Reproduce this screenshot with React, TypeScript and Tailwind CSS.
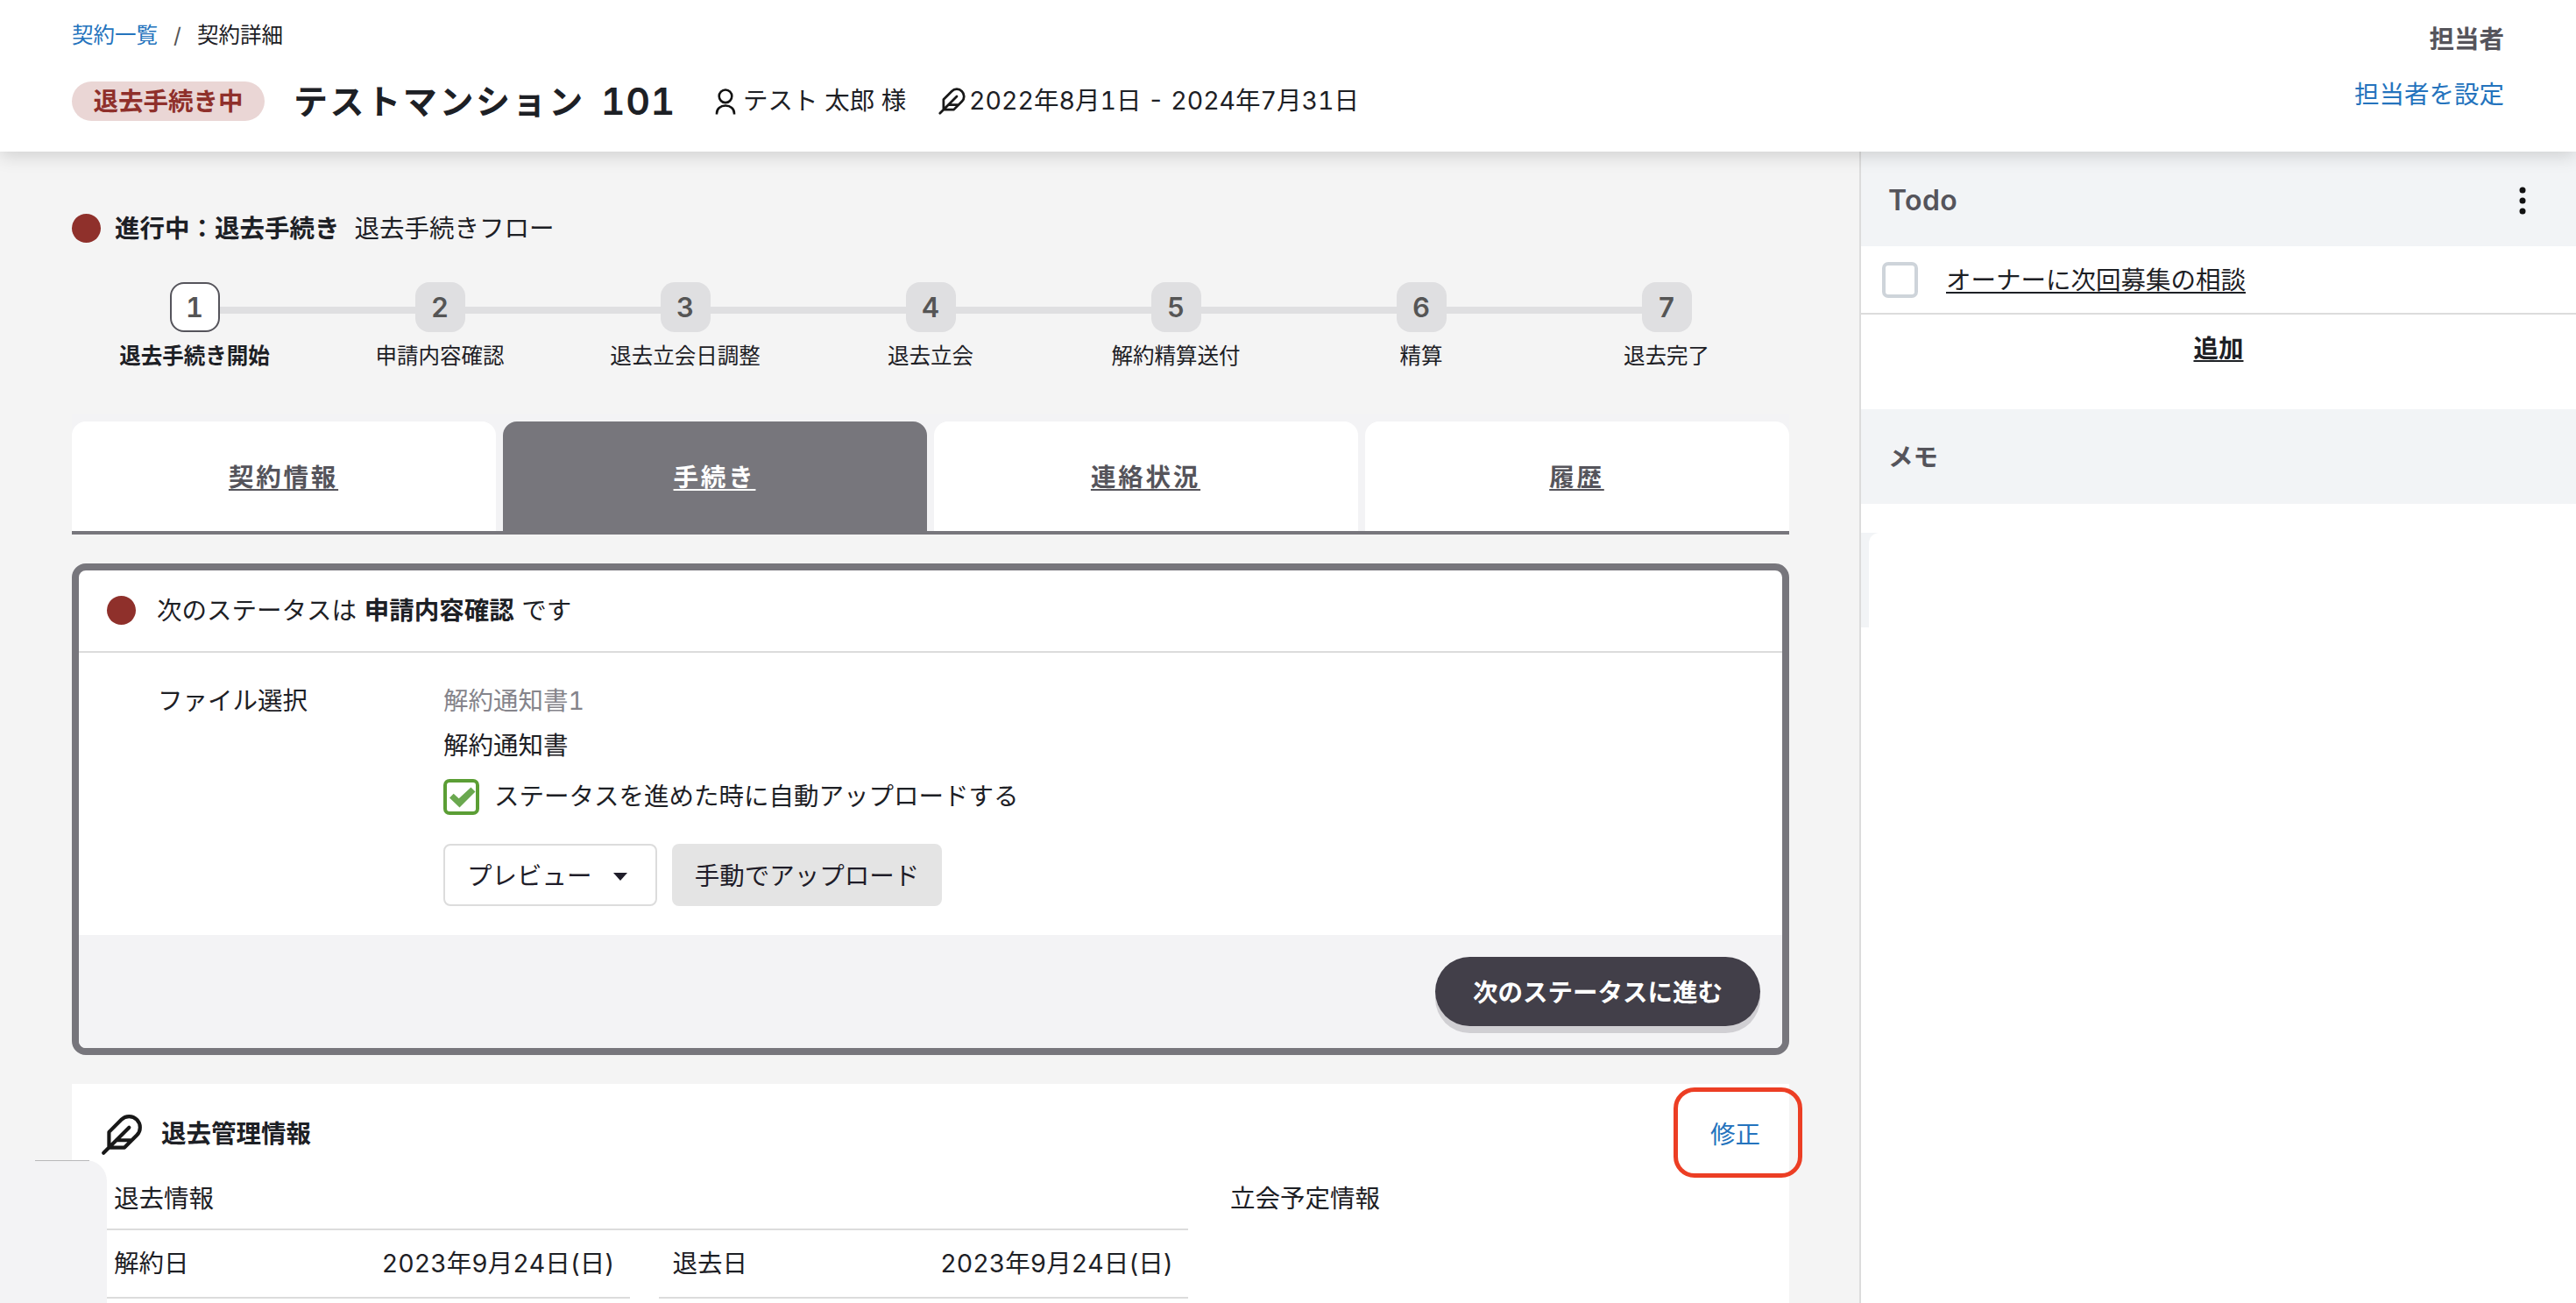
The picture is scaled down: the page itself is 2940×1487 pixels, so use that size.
import { clsx } from 'clsx';

const steps = [
  '退去手続き開始',
  '申請内容確認',
  '退去立会日調整',
  '退去立会',
  '解約精算送付',
  '精算',
  '退去完了',
];

const tabs = ['契約情報', '手続き', '連絡状況', '履歴'];

const dates = [
  { label: '解約日', value: '2023年9月24日(日)' },
  { label: '退去日', value: '2023年9月24日(日)' },
];

function PersonIcon() {
  return (
    <svg viewBox="0 0 24 30" className="h-[30px] w-6" fill="none" stroke="#111" strokeWidth="2.6">
      <circle cx="12" cy="8.800" r="7.300" />
      <path d="M2 29.500v-1c0-5.500 4.300-9 10-9s10 3.500 10 9v1" />
    </svg>
  );
}

function FeatherIcon({ className }: { className?: string }) {
  return (
    <svg
      viewBox="0 0 24 24"
      className={className}
      fill="none"
      stroke="#181818"
      strokeWidth="2"
      strokeLinecap="round"
      strokeLinejoin="round"
    >
      <path d="M20.240 12.240a6 6 0 0 0-8.490-8.490L5 10.500V19h8.500zM16 8L2 22M17.500 15H9" />
    </svg>
  );
}

function Header() {
  return (
    <header className="relative z-20 flex h-[173px] justify-between bg-white pl-[82px] pr-[82px] shadow-[0_4px_20px_rgba(0,0,0,0.16)]">
      <div>
        <nav className="flex h-[81px] items-center text-[24.5px]">
          <a className="text-[#2473bd]">契約一覧</a>
          <span className="w-[45px] text-center text-[#555]">/</span>
          <span>契約詳細</span>
        </nav>
        <div className="flex h-[69px] items-center">
          <span className="flex h-[45px] w-[220px] items-center justify-center rounded-full bg-[#ead6d5] pt-0.5 text-[28.5px] font-bold text-[#8f302b]">
            退去手続き中
          </span>
          <h1 className="ml-[33px] flex w-[481px] shrink-0 items-center whitespace-nowrap text-[39px] font-bold tracking-[2.6px]">
            テストマンション
            <span className="ml-[18px] text-[43px] font-semibold tracking-[0.5px]">101</span>
          </h1>
          <PersonIcon />
          <span className="ml-[8px] w-[222px]">テスト 太郎 様</span>
          <FeatherIcon className="size-[33px]" />
          <span className="ml-[3px]">2022年8月1日 - 2024年7月31日</span>
        </div>
      </div>
      <div className="flex flex-col items-end">
        <span className="mt-[23px] flex h-11 items-center font-bold text-[#55545b]">担当者</span>
        <a className="mt-[19px] flex h-11 items-center text-[#2473bd]">担当者を設定</a>
      </div>
    </header>
  );
}

function Stepper() {
  return (
    <ol className="mt-[41px] grid grid-cols-7">
      {steps.map((step, i) => (
        <li key={step} className="flex flex-col items-center">
          <div className="flex w-full items-center">
            <span className={clsx('mt-1.5 h-2 flex-1', i > 0 && 'bg-[#dfdfe1]')} />
            <span
              className={clsx(
                'flex size-[57px] items-center justify-center rounded-2xl text-[31px] font-semibold text-[#555]',
                i === 0 ? 'border-2 border-[#55545b] bg-white' : 'bg-[#dfdfe1]'
              )}
            >
              {i + 1}
            </span>
            <span className={clsx('mt-1.5 h-2 flex-1', i < 6 && 'bg-[#dfdfe1]')} />
          </div>
          <span
            className={clsx(
              'mt-[9px] flex h-9 items-center whitespace-nowrap text-[24.5px]',
              i === 0 && 'font-bold'
            )}
          >
            {step}
          </span>
        </li>
      ))}
    </ol>
  );
}

function Tabs() {
  return (
    <div className="mt-[48px] grid grid-cols-4 gap-2 border-b-4 border-[#77767c] bg-[#f3f3f5] pt-[9px]">
      {tabs.map((tab) => (
        <a
          key={tab}
          className={clsx(
            'flex h-[125px] items-center justify-center rounded-t-2xl pt-[3px] pr-px font-bold tracking-[2.8px] underline decoration-2 underline-offset-[3px]',
            tab === '手続き' ? 'bg-[#77767c] text-white' : 'bg-white text-[#55545b]'
          )}
        >
          {tab}
        </a>
      ))}
    </div>
  );
}

function StatusPanel() {
  return (
    <section className="mt-[33px] h-[561px] overflow-hidden rounded-2xl border-8 border-[#77767c] bg-white">
      <div className="flex h-[94px] items-center border-b-2 border-[#dcdcdc] pb-px pl-8">
        <span className="size-[33px] rounded-full bg-[#8f302b]" />
        <p className="ml-[24px] mt-0.5 whitespace-pre">
          次のステータスは <b className="mx-px">申請内容確認</b> です
        </p>
      </div>
      <div className="flex h-[322px] pl-[90px] pt-[30px]">
        <span className="flex h-[51px] w-[326px] items-center">ファイル選択</span>
        <div>
          <div className="flex h-[51px] items-center text-[#85848b]">解約通知書1</div>
          <div className="flex h-[51px] items-center">解約通知書</div>
          <label className="mt-[12px] flex h-10 items-center">
            <span className="flex size-[41px] items-center justify-center rounded-[7px] border-4 border-[#5b9e35]">
              <svg viewBox="0 0 32 32" className="size-8" fill="#6aa84f">
                <path d="M2 17.500l4.700-4.800 6 5.600L26.500 5.500l5 5L13.500 28.500z" />
              </svg>
            </span>
            <span className="ml-[17px] mt-px">ステータスを進めた時に自動アップロードする</span>
          </label>
          <div className="mt-[34px] flex h-[71px] gap-[17px]">
            <button className="flex w-[244px] items-center rounded-lg border-2 border-[#dcdcdc] pl-[25px] pt-[3px] text-[#1f1d29]">
              プレビュー
              <svg viewBox="0 0 16 9" className="ml-[24px] h-[9px] w-4" fill="#1f1d29">
                <path d="M0 0h16L8 9z" />
              </svg>
            </button>
            <button className="w-[308px] rounded-lg bg-[#e4e4e4] pt-[3px] text-[#1f1d29]">
              手動でアップロード
            </button>
          </div>
        </div>
      </div>
      <div className="flex h-[129px] justify-end bg-[#f3f3f5] pr-[25px] pt-[25px]">
        <button className="flex h-[79px] w-[371px] items-center justify-center rounded-full bg-[#423f49] pt-[3px] font-bold text-white shadow-[0_8px_0_#d0cfd3]">
          次のステータスに進む
        </button>
      </div>
    </section>
  );
}

function ManagementCard() {
  return (
    <section className="mt-[33px] flex-1 bg-white">
      <div className="flex h-[111px] items-center pl-[32px]">
        <FeatherIcon className="mt-[5px] size-[50px]" />
        <h2 className="ml-[20px] mt-1 font-bold">退去管理情報</h2>
        {/* highlight frame runs past the card's right edge */}
        <a className="-mr-[15px] ml-auto flex h-[103px] w-[147px] items-center justify-center rounded-3xl border-[5px] border-[#ec3e24] pr-[6px] pt-[5px] text-[#2473bd]">
          修正
        </a>
      </div>
      <div className="flex pl-[32px] pt-[3px]">
        <div className="w-[1242px]">
          <div className="flex h-[53px] items-start border-b-2 border-[#dcdcdc] pl-4 pt-[3px]">
            退去情報
          </div>
          <div className="grid grid-cols-2 gap-[33px]">
            {dates.map((d) => (
              <div
                key={d.label}
                className="flex h-[78px] items-center justify-between border-b-2 border-[#dcdcdc] pl-4 pr-[17px] pt-px"
              >
                <span>{d.label}</span>
                <span>{d.value}</span>
              </div>
            ))}
          </div>
        </div>
        <div className="ml-[48px] pt-[3px]">立会予定情報</div>
      </div>
    </section>
  );
}

function Sidebar() {
  return (
    <aside className="w-[818px] border-l-2 border-[#dcdcdc] bg-white">
      <div className="flex h-[108px] items-center justify-between bg-[#f2f4f6] pl-[31px] pr-[57px] pt-[3px]">
        <h3 className="text-[32px] font-semibold tracking-[0.4px] text-[#55545b]">Todo</h3>
        <svg viewBox="0 0 8 32" className="h-8 w-2" fill="#111">
          <circle cx="4" cy="4" r="3.500" />
          <circle cx="4" cy="16" r="3.500" />
          <circle cx="4" cy="28" r="3.500" />
        </svg>
      </div>
      <div className="flex h-[78px] items-center border-b-2 border-[#dcdcdc] pl-6">
        <span className="size-[41px] rounded-[7px] border-4 border-[#ced4da]" />
        <a className="ml-8 mt-0.5 underline decoration-2 underline-offset-[3px]">
          オーナーに次回募集の相談
        </a>
      </div>
      <div className="flex h-[108px] justify-center pt-[19px]">
        <a className="flex h-10 items-center font-bold underline decoration-2 underline-offset-[3px]">
          追加
        </a>
      </div>
      <div className="flex h-[108px] items-center bg-[#f2f4f6] pl-[31px] pt-0.5">
        <h3 className="font-bold text-[#55545b]">メモ</h3>
      </div>
      <div className="mt-[33px] h-[108px] bg-[#f2f4f6] pl-[9px]">
        <div className="h-full rounded-tl-[12px] bg-white" />
      </div>
    </aside>
  );
}

export default function App() {
  return (
    <div className="relative flex h-[1487px] w-[2940px] flex-col overflow-hidden bg-[#f4f4f4] font-['Inter','Noto_Sans_CJK_JP',sans-serif] text-[28.5px] leading-none tabular-nums text-[#1d2025]">
      <Header />
      <div className="flex min-h-0 flex-1">
        <main className="flex w-[2122px] flex-col pl-[82px] pr-[80px] pt-[67px]">
          <div className="flex h-[41px] items-center">
            <span className="size-[33px] rounded-full bg-[#8f302b]" />
            <h2 className="ml-4 mt-0.5 font-bold">進行中：退去手続き</h2>
            <span className="ml-[17px] mt-0.5">退去手続きフロー</span>
          </div>
          <Stepper />
          <Tabs />
          <StatusPanel />
          <ManagementCard />
        </main>
        <Sidebar />
      </div>
      <div className="absolute bottom-0 left-0 h-[163px] w-[122px] rounded-tr-3xl bg-[#f3f3f5]">
        <div className="ml-10 h-px w-[62px] bg-[#b8b8ba]" />
      </div>
    </div>
  );
}
